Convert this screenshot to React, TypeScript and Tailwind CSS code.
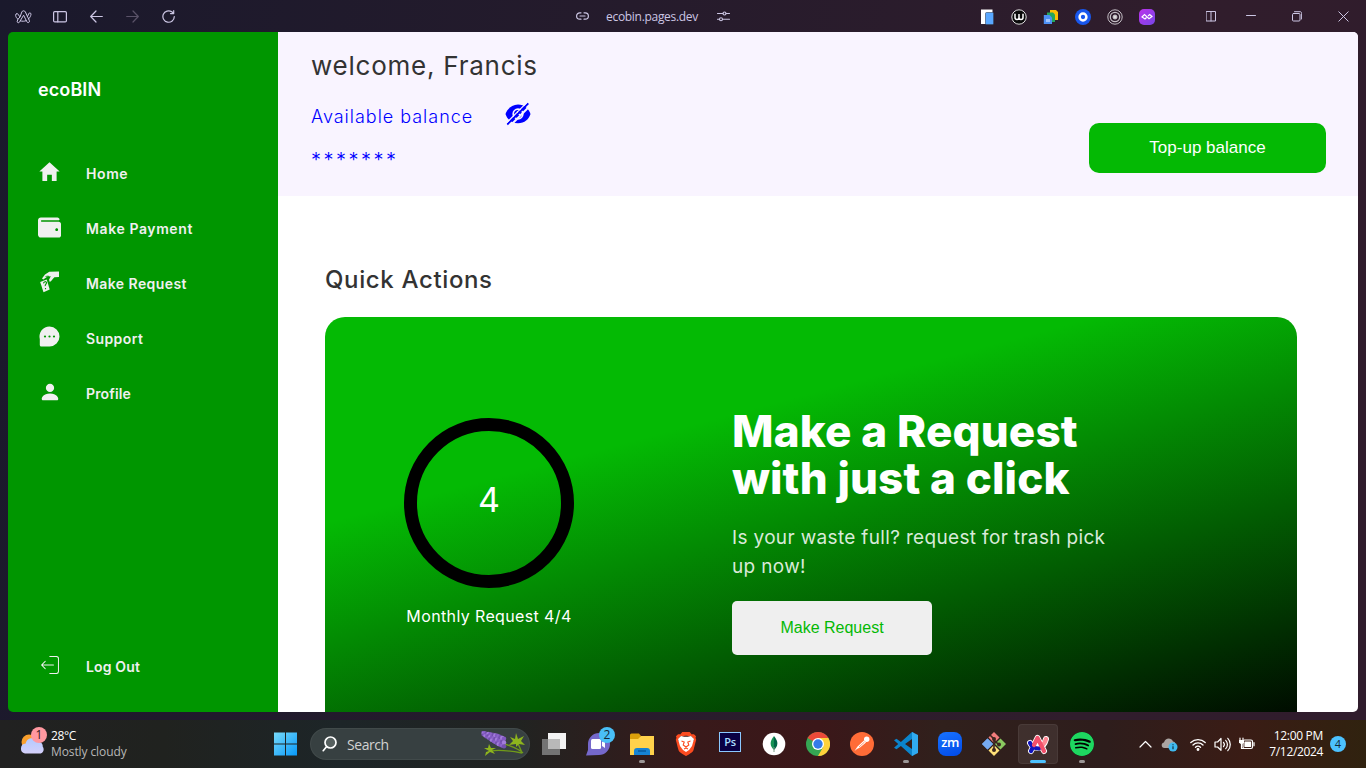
import type { ReactNode } from "react";
import { IoMdHome } from "react-icons/io";
import { FaWallet } from "react-icons/fa";
import { BsPersonFill } from "react-icons/bs";
import { CiLogout } from "react-icons/ci";
import { SiBrave, SiSpotify } from "react-icons/si";

const stroke = { fill: "none", stroke: "currentColor", strokeLinecap: "round", strokeLinejoin: "round" } as const;

function ArcOutline() {
  return (
    <svg width="18" height="16" viewBox="0 0 18 16" {...stroke} strokeWidth="1">
      <path d="M1.200 5c.8-.7 2-.2 2.200.6.3 1 .9 1.700 1.700 2.200L6.800 3c.5-1.600 3-1.600 3.600 0l2 4.400c.6-.8 1-1.600 1.200-2.600.3-1.300 2.600-1.100 2.400.4-.3 2-1.100 3.300-2.400 4.700l.8 1.900c.6 1.700-1.700 2.500-2.500 1l-.6-1.200c-2 .8-4.100.8-6.100.2l-.6 1.200c-.8 1.400-3 .6-2.300-1l.7-1.700C1.700 9.300.9 8.100.6 6.300c0-.5.2-1 .6-1.300z" />
      <path d="M5.100 7.800 3 10.300M5.300 11.700l3.300-5.500 2.700 5.400M12.400 7.400l1.200 2.500" />
    </svg>
  );
}

function TitleBar() {
  return (
    <header className="grid h-8 shrink-0 grid-cols-[1fr_auto_1fr] items-center text-[#ccc6e4]">
      <div className="flex items-center pl-[15px] pt-px">
        <ArcOutline />
        <svg className="ml-[20px]" width="14" height="12" viewBox="0 0 14 12" {...stroke} strokeWidth="1.200">
          <rect x=".6" y=".6" width="12.800" height="10.300" rx="1.200" /><path d="M4.800 1v9.800" />
        </svg>
        <svg className="ml-[23px]" width="13" height="13" viewBox="0 0 13 13" {...stroke} strokeWidth="1.200"><path d="M12.300 6.500H.7M6 1 .7 6.500 6 12" /></svg>
        <svg className="ml-[23px] text-[#5a5268]" width="13" height="13" viewBox="0 0 13 13" {...stroke} strokeWidth="1.200"><path d="M.7 6.500h11.600M7 1l5.300 5.500L7 12" /></svg>
        <svg className="ml-[23px]" width="13" height="13" viewBox="0 0 13 13" {...stroke} strokeWidth="1.200"><path d="M12.300 6.500A5.700 5.700 0 1 1 9.800 1.800L11.500 3.300M11.700.7v2.900H8.500" /></svg>
      </div>
      <div className="flex items-center pr-[60px]">
        <svg width="13" height="8" viewBox="0 0 13 8" {...stroke} strokeWidth="1.200"><path d="M5 .8H3.800a3.200 3.200 0 0 0 0 6.400H5M8 .8h1.200a3.200 3.200 0 0 1 0 6.400H8M4 4h5" /></svg>
        <span className="ml-[17px] mr-[19px] w-[92px] whitespace-nowrap pt-px font-['Open_Sans',sans-serif] text-[12px] tracking-[-0.300px]">ecobin.pages.dev</span>
        <svg width="13" height="11" viewBox="0 0 13 11" {...stroke} strokeWidth="1.100"><path d="M.5 2.500H6M9 2.500h3.500M.5 8.300h2M5.600 8.300h6.900" /><circle cx="7.500" cy="2.500" r="1.500" /><circle cx="4" cy="8.300" r="1.500" /></svg>
      </div>
      <div className="flex items-center justify-end pr-[17px] pt-px">
        <svg width="14" height="16" viewBox="0 0 14 16"><path d="M1 .5h11.500v14.500H1z" fill="#fff" /><rect x="5.500" y="3.500" width="8" height="12" rx="1" fill="#59a7ff" stroke="#33465f" strokeWidth=".6" /></svg>
        <svg className="ml-[17px]" width="16" height="16" viewBox="0 0 16 16"><circle cx="8" cy="8" r="7.200" fill="#0a0a0a" stroke="#f5f5f5" strokeWidth=".9" /><path d="M4 4.700v3.800q0 2 2 2t2-2V5v3.500q0 2 2 2t2-2V4.700" fill="none" stroke="#fff" strokeWidth="1.500" /></svg>
        <svg className="ml-[16px]" width="16" height="16" viewBox="0 0 16 16"><path d="M7 1h6l2 2v8H7z" fill="#fbbc04" /><path d="M4 3.500h6l2 2v7.500H4z" fill="#24a65b" /><path d="M.8 6h5.700l2.500 2.500V15H.8z" fill="#4d91f5" /><path d="M3 10h4v3H3z" fill="#9fc5ff" /></svg>
        <svg className="ml-[16px]" width="16" height="16" viewBox="0 0 16 16"><circle cx="8" cy="8" r="8" fill="#1857ed" /><circle cx="8" cy="8" r="3.400" fill="none" stroke="#fff" strokeWidth="2.500" /></svg>
        <svg className="ml-[16px]" width="16" height="16" viewBox="0 0 16 16" fill="none" stroke="#c4bec5"><circle cx="8" cy="8" r="7.200" /><circle cx="8" cy="8" r="4.700" strokeWidth="1.300" /><circle cx="8" cy="8" r="2" fill="#ddd" /></svg>
        <svg className="ml-[16px]" width="16" height="16" viewBox="0 0 16 16"><defs><linearGradient id="ext" x2="1" y2="1"><stop stopColor="#bd32eb" /><stop offset="1" stopColor="#7646e8" /></linearGradient></defs><rect width="16" height="16" rx="5" fill="url(#ext)" /><path d="M7.500 8.500 6 10 3 8l2.500-2.500L10 9.800 13 7.500l-2.300-2L9 7" fill="none" stroke="#fff" strokeWidth="1.200" /></svg>
        <svg className="ml-[51px]" width="10" height="11" viewBox="0 0 10 11" {...stroke}><path d="M.5.5h9v9.500h-9zM5 .5V10" /></svg>
        <svg className="ml-[30px]" width="10" height="11" viewBox="0 0 10 11" {...stroke}><path d="M.5 4.500h9" /></svg>
        <svg className="ml-[36px]" width="10" height="11" viewBox="0 0 10 11" {...stroke}><rect x=".5" y="2.500" width="7.500" height="7.500" rx="1" /><path d="M2.500.7H8c1 0 1.600.6 1.600 1.600V8" /></svg>
        <svg className="ml-[36px]" width="11" height="11" viewBox="0 0 11 11" {...stroke}><path d="m.8.800 9.400 9.400M10.200.8.800 10.200" /></svg>
      </div>
    </header>
  );
}

function CardHandIcon() {
  return (
    <svg width="21" height="22" viewBox="0 0 21 22">
      <path d="M20 .5v5.400l-4.600.4c-1.800 1.500-2.500 3.800-4.600 4.800L10 8.700l1.800-3.500-3.300.3-4.200 3-1.300-.9 3-4L10.300.8z" fill="#efefef" />
      <path d="m1.200 11 6.500-2.400 3 9.800-6.200 2.900z" fill="#efefef" />
      <path d="M4.500 12.400c.1-2 3-2.400 3-.6 0 1.500-1.500 1.300-1.300 3.300M6.500 17v1.200" fill="none" stroke="#009600" strokeWidth="1.100" />
      <path d="M6.500 5.500 9.500 5l-1.500 3" fill="none" stroke="#009600" strokeWidth=".8" />
    </svg>
  );
}

function ChatIcon() {
  return (
    <svg width="21" height="21" viewBox="0 0 21 21">
      <path d="M10.500.5a10 10 0 1 1 0 20H2.300a1.500 1.500 0 0 1-1.500-1.500v-6A10 10 0 0 1 10.500.5z" fill="currentColor" />
      <g fill="#009600"><circle cx="6" cy="10.500" r="1.100" /><circle cx="10.500" cy="10.500" r="1.100" /><circle cx="15" cy="10.500" r="1.100" /></g>
    </svg>
  );
}

function NavItem({ icon, label, spacing }: { icon: ReactNode; label: string; spacing: string }) {
  return (
    <a className="flex h-[55px] items-center">
      <span className="flex w-[23px] -translate-y-[2px] justify-center">{icon}</span>
      <span className={`ml-[25px] whitespace-nowrap text-[14px] font-semibold ${spacing}`}>{label}</span>
    </a>
  );
}

function Sidebar() {
  return (
    <aside className="flex w-[270px] shrink-0 flex-col bg-[#009600] px-[30px] font-['Inter',sans-serif] text-[#f0f0f0]">
      <h1 className="mt-[44px] h-7 text-[18px] font-semibold leading-7 tracking-[0.1px] text-white">ecoBIN</h1>
      <nav className="mt-[42px] flex flex-col">
        <NavItem icon={<IoMdHome className="shrink-0" size={25} />} label="Home" spacing="tracking-[0.600px]" />
        <NavItem icon={<FaWallet className="translate-y-px" size={23} />} label="Make Payment" spacing="tracking-[0.600px]" />
        <NavItem icon={<CardHandIcon />} label="Make Request" spacing="tracking-[0.420px]" />
        <NavItem icon={<ChatIcon />} label="Support" spacing="tracking-[0.400px]" />
        <NavItem icon={<BsPersonFill size={22} />} label="Profile" spacing="tracking-[0.150px]" />
      </nav>
      <div className="mb-[18px] mt-auto">
        <NavItem icon={<CiLogout className="shrink-0" size={24} />} label="Log Out" spacing="tracking-[0.150px]" />
      </div>
    </aside>
  );
}

function HiddenEye() {
  return (
    <svg width="26" height="24" viewBox="0 0 26 24">
      <path d="M13 2.500C6.500 2.500 2 7.500.5 12 2 17 6.500 21.300 13 21.300S24 17 25.500 12C24 7.500 19.500 2.500 13 2.500z" fill="#0000ff" />
      <circle cx="13" cy="12" r="4.800" fill="none" stroke="#f9f4ff" strokeWidth="1.700" />
      <path d="M12.500 9.200a2.900 2.900 0 0 0 2.900 3.300" fill="none" stroke="#f9f4ff" strokeWidth="1.200" />
      <path d="M4.700 24.300 25.300 3.500" stroke="#f9f4ff" strokeWidth="2" />
      <path d="M2.200 22.500 23.300 1.400" stroke="#0000ff" strokeWidth="2" />
      <path d="M.8 21.500 21.500.8" stroke="#f9f4ff" strokeWidth="1.200" />
    </svg>
  );
}

function Dashboard() {
  return (
    <main className="flex min-w-0 flex-1 flex-col bg-white font-['Inter',sans-serif]">
      <section className="flex h-[164px] shrink-0 justify-between bg-[#f9f4ff] pl-[33px] pr-8">
        <div className="whitespace-nowrap text-[#0000ff]">
          <h2 className="mt-[15px] text-[26px] leading-[38px] tracking-[0.760px] text-[#333]">welcome, Francis</h2>
          <div className="mt-[17px] flex h-7 items-center">
            <span className="w-[194px] text-[18px] font-light tracking-[0.980px]">Available balance</span>
            <span className="-mt-[5px]"><HiddenEye /></span>
          </div>
          <p className="mt-[16px] text-[20px] font-light leading-7 tracking-[2.500px]">*******</p>
        </div>
        <button className="mt-[91px] h-[50px] w-[237px] rounded-[10px] bg-[#04b904] pb-px font-['Liberation_Sans',sans-serif] text-[17px] text-white">Top-up balance</button>
      </section>
      <section className="flex flex-1 flex-col px-[47px] pr-[61px]">
        <h3 className="mt-[66px] text-[24px] font-medium leading-9 tracking-[0.640px] text-[#333]">Quick Actions</h3>
        <div className="mt-[19px] flex h-[427px] shrink-0 rounded-t-[20px] bg-[linear-gradient(165deg,#04ba04_30%,#000_100%)]">
          <div className="flex w-[328px] flex-col items-center pt-[101px] text-white">
            <div className="flex size-[170px] items-center justify-center rounded-full border-[13px] border-black pb-[7px] text-[34px]">4</div>
            <p className="mt-[16px] whitespace-nowrap text-[16px] leading-6 tracking-[0.370px]">Monthly Request 4/4</p>
          </div>
          <div className="ml-[79px] whitespace-nowrap pt-[90px]">
            <h4 className="text-[44px] font-extrabold leading-[48px] text-white"><span className="block tracking-[0.150px]">Make a Request</span><span className="-mt-px block tracking-[0.100px]">with just a click</span></h4>
            <p className="mt-[21px] text-[19px] leading-[29px] tracking-[0.340px] text-[#d9ead9]">Is your waste full? request for trash pick<br />up now!</p>
            <button className="mt-[20px] h-[54px] w-[200px] rounded-[5px] bg-[#efefef] font-['Liberation_Sans',sans-serif] text-[16px] text-[#04b904]">Make Request</button>
          </div>
        </div>
      </section>
    </main>
  );
}

function TaskbarApp({ children, mark }: { children: ReactNode; mark?: boolean }) {
  return (
    <div className="relative flex h-12 w-11 shrink-0 items-center justify-center">
      {children}
      {mark && <i className="absolute bottom-[5px] h-[3px] w-[6px] rounded-full bg-[#9b9696]" />}
    </div>
  );
}

function Lavender() {
  const buds = Array.from({ length: 39 }, (_, i) => {
    const step = Math.floor(i / 3);
    return { x: 3 + step * 1.75, y: 2.5 + step * 0.75 + ((i % 3) - 1) * (1.3 + Math.min(step, 8) * 0.32), r: 1.5 + Math.min(step, 9) * 0.08 };
  });
  return (
    <svg width="46" height="26" viewBox="0 0 46 26">
      <path d="M25 13c8 3 13 4 18 9M11 20c9-2 20 0 31 2M36 10c4 5 5 10 6 12" fill="none" stroke="#719b19" strokeWidth="1.400" />
      {buds.map((b, i) => <circle key={i} cx={b.x} cy={b.y} r={b.r} fill={["#8258c2", "#a37ddb", "#7450ae", "#8d65ca"][i % 4]} />)}
      <path d="m36 13-7 1 4-4-3-4 5 2 1-6 2 6 6-3-3 5 4 4-6-1-3 3zM9 20l-5-3 4 0 1-4 2 4 5 0-4 2 3 4-5-2-5 4 1-4z" fill="#8eb51d" />
    </svg>
  );
}

function Taskbar() {
  return (
    <footer className="flex h-12 w-full shrink-0 items-center bg-[linear-gradient(90deg,#212121_0%,#20221f_12%,#1d2528_25%,#212321_38%,#38191a_51%,#3b1719_60%,#30201c_69%,#2e1d1c_81%,#3a1c15_91%,#30220f_100%)] font-['Open_Sans',sans-serif] text-[12px] text-white">
      <div className="flex w-[273px] shrink-0 items-center pl-5">
        <div className="relative -mt-[3px] h-8 w-[31px]">
          <svg width="27" height="32" viewBox="0 0 27 32"><defs><linearGradient id="cloud" x2="0" y2="1"><stop stopColor="#b3caff" /><stop offset="1" stopColor="#d4d0fa" /></linearGradient></defs><circle cx="9" cy="15" r="7.500" fill="#f9a02d" /><path d="M5 26.500a5 5 0 0 1 .7-9.900c1-6 9-7.300 12-1.800 3.200-.5 5.300 2.200 5 4.600 2.300 3.200.3 7.100-3.200 7.100z" fill="url(#cloud)" /></svg>
          <span className="absolute left-[11px] top-0 flex size-4 items-center justify-center rounded-full bg-[#ff98a0] text-[12px] text-[#351b20]">1</span>
        </div>
        <div className="whitespace-nowrap leading-4"><p className="tracking-[-0.35px]">28°C</p><p className="tracking-[-0.100px] text-[#b7b7b7]">Mostly cloudy</p></div>
      </div>
      <svg className="shrink-0" width="25" height="24" viewBox="0 0 25 24"><defs><linearGradient id="win" gradientUnits="userSpaceOnUse" x2="24" y2="24"><stop stopColor="#7bdcfa" /><stop offset="1" stopColor="#0698fa" /></linearGradient></defs><path d="M1 .5h11v11H1zM13 .5h11v11H13zM1 12.500h11v11H1zM13 12.500h11v11H13z" fill="url(#win)" /></svg>
      <div className="ml-[12px] flex h-8 w-[220px] shrink-0 items-center rounded-full border border-white/5 bg-[#374041] pl-[11px] pr-[3px]">
        <svg width="15" height="16" viewBox="0 0 15 16" {...stroke} strokeWidth="1.700"><circle cx="8.500" cy="6.500" r="5.500" fill="#56605f" /><path d="m4.500 10.700-3.300 4" /></svg>
        <span className="ml-[10px] text-[14px] tracking-[-0.450px] text-[#d2d2d2]">Search</span>
        <span className="ml-auto"><Lavender /></span>
      </div>
      <div className="ml-[2px] flex shrink-0">
        <TaskbarApp><svg width="24" height="24" viewBox="0 0 24 24"><path d="M6 1h18v16H6z" fill="#f3f3f3" /><path d="M0 7h18v16H0z" fill="#737373" /><path d="M6 7h12v10H6z" fill="#b9b9b9" /></svg></TaskbarApp>
        <TaskbarApp><svg width="24" height="24" viewBox="0 0 24 24"><path d="M0 23.500 2 18V12a11 11 0 1 1 11 11z" fill="#7568cb" /><rect x="5" y="7" width="10" height="10" rx="1.500" fill="#fff" /><path d="m16 10 3-2v8l-3-2z" fill="#fff" /></svg><b className="absolute left-[23px] top-[7px] flex size-4 items-center justify-center rounded-full bg-[#49bff6] text-[12px] font-normal text-[#172a34]">2</b></TaskbarApp>
        <TaskbarApp mark><svg width="24" height="24" viewBox="0 0 24 24"><path d="M0 3q0-1.500 1.500-1.500H9L11 4l-2 4H0z" fill="#dba00b" /><path d="M11 4h13v19H0V7h8z" fill="#ffd24b" /><path d="M4 23v-4q0-3 3-3h10q3 0 3 3v4z" fill="#1683d3" /><path d="M8 19h8" stroke="#075a9e" strokeWidth="1.500" /></svg></TaskbarApp>
        <TaskbarApp><span className="relative flex"><SiBrave size={24} color="#fb4b20" /></span><svg className="absolute" width="16" height="18" viewBox="0 0 16 18"><path d="m0 4 3-3 3 .7h4l3-.7 3 3-2 7-3 4-3 2-3-2-3-4z" fill="#fff" /><path d="m3.500 6 2.700 1-1 3L8 12l2.800-2-1-3 2.700-1M6 14l2-1 2 1" fill="none" stroke="#fb4b20" strokeWidth="1.100" /></svg></TaskbarApp>
        <TaskbarApp><span className="mb-[4px] flex h-5 w-[22px] items-center justify-center border border-[#8bc8ff] bg-[#090044] text-[11px] font-semibold tracking-tight text-[#a9ddff]">Ps</span></TaskbarApp>
        <TaskbarApp><svg width="24" height="24" viewBox="0 0 24 24"><circle cx="12" cy="12" r="11.300" fill="#fff" /><path d="M12 4c-5 6-4 10 0 14z" fill="#159154" /><path d="M12 4c5 6 4 10 0 14z" fill="#006546" /><path d="M12 15v5" stroke="#789a83" /></svg></TaskbarApp>
        <TaskbarApp><svg width="24" height="24" viewBox="0 0 24 24"><circle cx="12" cy="12" r="12" fill="#35a653" /><path d="M12 12 1.600 6A12 12 0 0 1 22.400 6H12z" fill="#eb4939" /><path d="M12 12V6h10.400A12 12 0 0 1 12 24l5.200-9z" fill="#ffd13a" /><circle cx="12" cy="12" r="6" fill="#fff" /><circle cx="12" cy="12" r="4.700" fill="#347be9" /></svg></TaskbarApp>
        <TaskbarApp><svg width="24" height="24" viewBox="0 0 24 24"><circle cx="12" cy="12" r="12" fill="#ff6c37" /><path d="m4.500 19 3-4.500 6.500-6 2 2-6 5-3 1.500z" fill="#fff" /><circle cx="16.700" cy="7.300" r="2.700" fill="#fff" /><path d="m9 15 5.500-5" stroke="#ff6c37" strokeWidth=".7" /></svg></TaskbarApp>
        <TaskbarApp mark><svg width="24" height="24" viewBox="0 0 24 24"><path d="M18 0 6.900 10 2.500 6.700 0 8.200 4.200 12 0 15.800l2.500 1.500L6.900 14 18 24l2-1V1zM18 7v10l-7-5z" fillRule="evenodd" fill="#0b84cc" /><path d="M18 0 24 3v18l-6 3z" fill="#30aaf0" /></svg></TaskbarApp>
        <TaskbarApp><span className="flex size-6 items-center justify-center rounded-[8px] bg-[linear-gradient(160deg,#1873ff,#0049e8)] pb-[2px] text-[13px] font-semibold tracking-[-0.6px]">zm</span></TaskbarApp>
        <TaskbarApp><svg width="24" height="24" viewBox="0 0 24 24"><path d="m12 0 5.500 5.500L12 11 6.500 5.500z" fill="#f17c7c" /><path d="m5.500 6.500L11 12l-5.500 5.500L0 12z" fill="#76aaf2" /><path d="M5.500 6.500 11 12l-5.500 5.500L0 12z" fill="#76aaf2" /><path d="M18.500 6.500 24 12l-5.500 5.500L13 12z" fill="#8ac960" /><path d="m12 13 5.500 5.500L12 24l-5.500-5.500z" fill="#ffe078" /><path d="m8 3 4 4v10M12 8l5 5" fill="none" stroke="#3b2620" strokeWidth="1.600" /><g fill="#3b2620"><circle cx="12" cy="7" r="2" /><circle cx="12" cy="18" r="2" /><circle cx="17" cy="12.500" r="2" /></g></svg></TaskbarApp>
        <TaskbarApp><div className="flex size-10 items-center justify-center rounded-[4px] border border-white/5 bg-white/8"><svg width="24" height="24" viewBox="0 0 24 24" fill="none" strokeLinecap="round" strokeLinejoin="round"><path d="m5 19 6.500-13 6.500 13M4 11c3 6 13 8 16-4" stroke="#fff" strokeWidth="6" /><path d="M20 7c-.8 3.500-2.500 5.500-5 7" stroke="#ff8793" strokeWidth="4.200" /><path d="M4 11c1.500 3.500 5 5.500 9 5.500M5 19l2.500-5" stroke="#1114bd" strokeWidth="4.200" /><path d="M8 13l3.500-7 6.500 13" stroke="#f2506b" strokeWidth="4.200" /></svg></div><i className="absolute bottom-[5px] h-[3px] w-4 rounded-full bg-[#4cc2ff]" /></TaskbarApp>
        <TaskbarApp mark><span className="flex rounded-full bg-black"><SiSpotify size={24} color="#1ed760" /></span></TaskbarApp>
      </div>
      <div className="ml-auto flex shrink-0 items-center pr-5">
        <svg width="13" height="8" viewBox="0 0 13 8" {...stroke} strokeWidth="1.200"><path d="m1 7 5.500-5.500L12 7" /></svg>
        <svg className="ml-[9px]" width="17" height="15" viewBox="0 0 17 15"><path d="M3.500 11C0 11-.3 6 3 5.500 4 1 10 0 12 4.500c3 0 4 6 0 6.500z" fill="#aaa4a2" /><circle cx="12" cy="10" r="4.500" fill="#3fbaf0" /><path d="M12 9.300v3M12 7.200v1" stroke="#12303d" strokeWidth="1.200" /></svg>
        <svg className="ml-[12px]" width="16" height="13" viewBox="0 0 16 13" {...stroke} strokeWidth="1.300"><path d="M.8 4.500a10.400 10.400 0 0 1 14.400 0M3 7a7 7 0 0 1 10 0M5.500 9.300a3.700 3.700 0 0 1 5 0" /><circle cx="8" cy="11.500" r=".8" fill="currentColor" /></svg>
        <svg className="ml-[8px]" width="17" height="15" viewBox="0 0 17 15" {...stroke} strokeWidth="1.200"><path d="M1 5h2.600L7 1.500v11.800L3.600 10H1zM9.500 5.300a3.500 3.500 0 0 1 0 4.400M11.700 3.300a6 6 0 0 1 0 8.400M13.800 1.300a9 9 0 0 1 0 12.400" /></svg>
        <svg className="ml-[7px]" width="17" height="14" viewBox="0 0 17 14" {...stroke} strokeWidth="1.200"><rect x="5" y="3" width="9.500" height="8.500" rx="1.500" /><path d="M7 5h5.500v4.500H7z" fill="currentColor" /><path d="M16 5.700v3M2 1v2M5 1v2" /><path d="M1 3h5v2.500q-2.500 3-5 0z" fill="currentColor" stroke="none" /><path d="M3.500 6v5.500H6" /></svg>
        <div className="ml-[13px] w-[55px] whitespace-nowrap text-right leading-4"><p className="tracking-[-0.3px]">12:00 PM</p><p className="tracking-[-0.35px]">7/12/2024</p></div>
        <span className="ml-[7px] flex size-4 items-center justify-center rounded-full bg-[#4cc2ff] text-[11px] text-[#132b38]">4</span>
      </div>
    </footer>
  );
}

export default function App() {
  return (
    <div className="flex h-screen w-screen flex-col overflow-hidden bg-[linear-gradient(100deg,#1a192c_0%,#251b2c_42%,#301d2c_80%,#301c2c_100%)]">
      <TitleBar />
      <div className="mx-2 mb-[8px] flex h-[680px] shrink-0 overflow-hidden rounded-[5px]">
        <Sidebar />
        <Dashboard />
      </div>
      <Taskbar />
    </div>
  );
}
